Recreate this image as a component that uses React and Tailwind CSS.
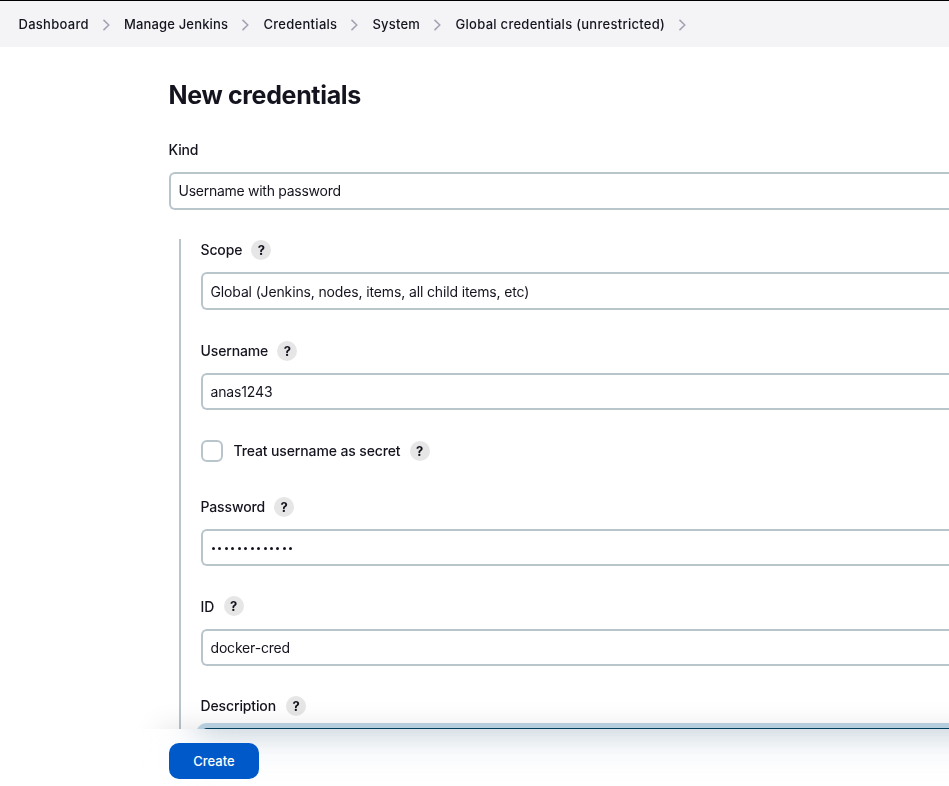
const crumbs = [
  { label: "Dashboard", width: "w-[70.5px] tracking-[0.28px]" },
  { label: "Manage Jenkins", width: "w-[104.5px] tracking-[0.16px]" },
  { label: "Credentials", width: "w-[74px] tracking-[0.28px]" },
  { label: "System", width: "w-[48px] tracking-[0.2px]" },
  { label: "Global credentials (unrestricted)", width: "w-[210px] tracking-[0.28px]" },
];

function Chevron() {
  return (
    <svg className="mr-[14.5px] ml-[13.5px] h-3 w-[7px] shrink-0" viewBox="0 0 7 12" fill="none" stroke="#a3a3b3" strokeWidth="1.6" strokeLinecap="round" strokeLinejoin="round">
      <path d="M1 1.4 5.8 6 1 10.6" />
    </svg>
  );
}

function Help() {
  return (
    <span className="flex size-5 shrink-0 items-center justify-center rounded-full bg-[#e6e6e6] text-[13px] leading-none font-bold">?</span>
  );
}

function Label({ children, className = "", textClass = "" }) {
  return (
    <div className={"flex h-5 items-center text-sm font-medium tracking-[-0.13px] whitespace-nowrap " + className}>
      <span className={"mr-[9px] " + textClass}>{children}</span>
      <Help />
    </div>
  );
}

function Field({ children, className = "" }) {
  return (
    <div className={"flex items-center rounded-l-[6px] border-2 border-r-0 border-[#b8c5cb] bg-white pl-[7.5px] text-sm whitespace-nowrap " + className}>
      {children}
    </div>
  );
}

export default function App() {
  return (
    <div className="flex h-[786px] flex-col overflow-hidden bg-white font-['Inter','Liberation_Sans',sans-serif] text-[#14141f]">
      <nav className="flex h-[47px] shrink-0 items-center border-t border-black bg-[#f4f4f7] pt-px pl-[18.5px] text-[13px] font-medium whitespace-nowrap">
        {crumbs.map((c) => (
          <div key={c.label} className="flex items-center">
            <span className={c.width}>{c.label}</span>
            <Chevron />
          </div>
        ))}
      </nav>

      <main className="relative h-[682px] shrink-0 overflow-hidden pl-[169px]">
        <h1 className="mt-[32px] -ml-[0.5px] text-[25px] leading-8 font-bold tracking-[-0.33px]">New credentials</h1>
        <div className="mt-[29px] -ml-[0.5px] h-5 text-sm leading-5 font-medium tracking-[-0.15px]">Kind</div>
        <Field className="mt-3 h-[38px] tracking-[-0.27px]">Username with password</Field>

        <section className="mt-[29px] ml-[10px] h-[500px] border-l-2 border-[#b8c5cb] pt-px pl-5">
          <Label className="-ml-[0.5px] tracking-[-0.2px]">Scope</Label>
          <Field className="mt-3 h-[38px] pt-[2px] tracking-[-0.14px]">Global (Jenkins, nodes, items, all child items, etc)</Field>
          <Label className="mt-[31px] -ml-[0.5px]">Username</Label>
          <Field className="mt-3 h-[37px] tracking-[-0.15px]">anas1243</Field>
          <div className="mt-[30px] flex h-[22px] items-center gap-[10.5px]">
            <span className="size-[22px] shrink-0 rounded-[6px] border-2 border-[#b8c5cb]" />
            <Label textClass="w-[167px]">Treat username as secret</Label>
          </div>
          <Label className="mt-[35px] -ml-[0.5px]">Password</Label>
          <Field className="mt-3 h-[37px] pt-[2px]">
            <span className="flex gap-[3.45px] pl-[1.5px]">
              {Array.from({ length: 13 }, (_, i) => (
                <span key={i} className="size-[3px] rounded-full bg-[#14141f]" />
              ))}
            </span>
          </Field>
          <Label className="mt-[30px]" textClass="-ml-[0.5px] pt-[2px] pr-[0.5px]">ID</Label>
          <Field className="mt-[13px] h-[37px] tracking-[-0.18px]">docker-cred</Field>
          <Label className="mt-[30px]" textClass="-ml-[0.5px] pr-px">Description</Label>
          <div className="relative z-10 mt-3 h-[37px] rounded-l-[6px] border-2 border-r-0 border-[#003f5f] shadow-[0_0_0_5px_#b5cddc]" />
        </section>
        <div className="pointer-events-none absolute top-[682px] right-[-60px] left-[160px] h-20 shadow-[0_0_30px_rgba(0,0,0,0.12)]" />
      </main>

      <footer className="relative flex h-[57px] shrink-0 items-start overflow-hidden bg-white pt-[14px] pl-[169px]">
        <div className="absolute -top-10 right-[-80px] left-[195px] h-[45px] rounded-[20px] bg-[#d0d9de] blur-[14px]" />
        <div className="absolute -top-10 right-[-80px] left-[180px] h-[70px] bg-[#f1f5f9] opacity-60 mix-blend-multiply blur-[18px]" />
        <button className="relative h-9 w-[90px] rounded-[10px] bg-[#0059c9] pt-[2px] text-[13px] font-medium text-white">Create</button>
      </footer>
    </div>
  );
}
